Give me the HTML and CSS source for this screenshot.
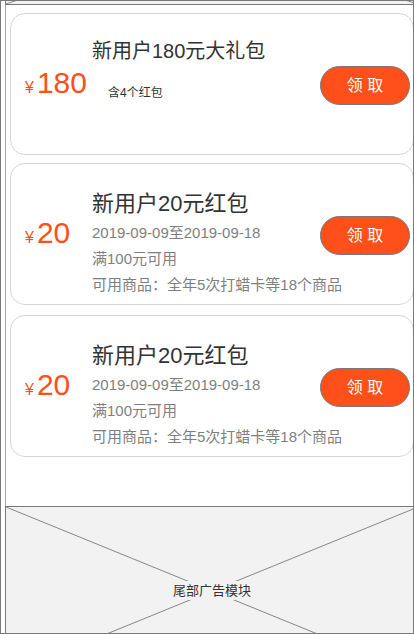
FILE: index.html
```html
<!DOCTYPE html>
<html lang="zh-CN">
<head>
<meta charset="utf-8">
<meta name="viewport" content="width=device-width, initial-scale=1">
<title>新用户红包</title>
<link rel="stylesheet" href="styles.css">
</head>
<body>
<div class="frame">
  <main class="page">
    <div class="banner">
      <svg class="cross" viewBox="0 0 414 140" preserveAspectRatio="none" aria-hidden="true">
        <path d="M0 140L414 0M0 0L414 140"/>
      </svg>
    </div>
    <section class="coupons">
      <article class="card">
        <p class="price"><span class="yen">¥</span>180</p>
        <div class="info">
          <h2 class="title title-small">新用户180元大礼包</h2>
          <p class="note">含4个红包</p>
        </div>
        <button class="claim" type="button">领 取</button>
      </article>
      <div class="singles">
        <article class="card">
          <p class="price"><span class="yen">¥</span>20</p>
          <div class="info">
            <h2 class="title">新用户20元红包</h2>
            <p class="detail">2019-09-09至2019-09-18</p>
            <p class="detail">满100元可用</p>
            <p class="detail">可用商品：全年5次打蜡卡等18个商品</p>
          </div>
          <button class="claim" type="button">领 取</button>
        </article>
        <article class="card">
          <p class="price"><span class="yen">¥</span>20</p>
          <div class="info">
            <h2 class="title">新用户20元红包</h2>
            <p class="detail">2019-09-09至2019-09-18</p>
            <p class="detail">满100元可用</p>
            <p class="detail">可用商品：全年5次打蜡卡等18个商品</p>
          </div>
          <button class="claim" type="button">领 取</button>
        </article>
      </div>
    </section>
    <footer class="ad">
      <svg class="cross" viewBox="0 0 414 170" preserveAspectRatio="none" aria-hidden="true">
        <path d="M0 0L414 170M0 170L414 0"/>
      </svg>
      <span class="ad-label">尾部广告模块</span>
    </footer>
  </main>
</div>
</body>
</html>
```
FILE: styles.css
```css
* {
  box-sizing: border-box;
}

body,
h2,
p {
  margin: 0;
}

body {
  background: #fff;
  color: #333;
  font-family: "Liberation Sans", "Noto Sans CJK SC", sans-serif;
}

.frame {
  position: relative;
  display: flex;
  height: 100vh;
  padding-left: 5px;
  overflow: hidden;
}

/* Window outline, drawn over the content it clips */
.frame::after {
  content: "";
  position: absolute;
  inset: 0;
  border: 1px solid #797979;
  pointer-events: none;
}

.page {
  display: flex;
  flex: 1;
  flex-direction: column;
  min-width: 0;
}

.banner {
  position: relative;
  flex: none;
  height: 5px;
  border: solid #797979;
  border-width: 0 0 1px 1px;
  background: #f2f2f2;
  overflow: hidden;
}

.cross {
  position: absolute;
  left: 0;
  bottom: 0;
  width: calc(100% + 3px);
  height: 140px;
  fill: none;
  stroke: #868686;
  stroke-width: 1;
}

.coupons {
  display: flex;
  flex: none;
  flex-direction: column;
  gap: 8px;
  padding: 8px 0 49px 4px;
  border-left: 1px solid #a6a6a6;
}

.singles {
  display: grid;
  gap: 10px;
}

.card {
  display: grid;
  grid-template-columns: 67px minmax(0, 1fr) 90px;
  height: 142px;
  padding: 0 3px 0 14px;
  border: 1px solid #d7d7d7;
  border-radius: 15px;
  background: #fff;
}

.price {
  margin-top: 52px;
  color: #ff4f1a;
  font-size: 30px;
  line-height: 34px;
  white-space: nowrap;
}

.yen {
  margin-right: 3px;
  font-size: 16px;
}

.info {
  padding-top: 24px;
  white-space: nowrap;
}

.title {
  font-size: 22px;
  font-weight: 400;
  line-height: 32px;
}

.title-small {
  font-size: 20px;
  line-height: 26px;
}

.note {
  margin: 20px 0 0 16px;
  font-size: 12px;
  line-height: 18px;
}

.detail {
  color: #7f7f7f;
  font-size: 15px;
  line-height: 26px;
}

.claim {
  height: 39px;
  margin-top: 52px;
  padding: 0;
  border: 1px solid #797979;
  border-radius: 20px;
  background: #ff4f1a;
  color: #fff;
  font: 16px/20px "Liberation Sans", "Noto Sans CJK SC", sans-serif;
}

.ad {
  position: relative;
  flex: none;
  display: flex;
  align-items: center;
  justify-content: center;
  height: 170px;
  margin-right: -5px;
  padding-bottom: 2px;
  border: 1px solid #797979;
  background: #f2f2f2;
}

.ad .cross {
  width: 100%;
  height: 100%;
}

.ad-label {
  position: relative;
  background: #f2f2f2;
  font-size: 13px;
  line-height: 19px;
}
```
